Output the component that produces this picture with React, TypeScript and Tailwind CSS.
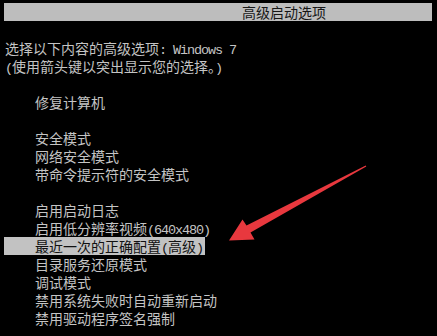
const cjk = "font-['Noto_Sans_CJK_SC',sans-serif]";

// ascii in the boot font is half the width of a CJK glyph
function A({ children }: { children: React.ReactNode }) {
  return <span className="font-['Liberation_Mono',monospace] text-[13.5px] tracking-[-1.1px]">{children}</span>;
}

const groups: React.ReactNode[][] = [
  ["修复计算机"],
  ["安全模式", "网络安全模式", "带命令提示符的安全模式"],
  [
    "启用启动日志",
    <>启用低分辨率视频<A>(640x480)</A></>,
    "HIGHLIGHT",
    "目录服务还原模式",
    "调试模式",
    "禁用系统失败时自动重新启动",
    "禁用驱动程序签名强制",
  ],
];

export default function App() {
  return (
    <div className={`relative w-[437px] h-[336px] overflow-hidden bg-black text-[#c4c4c4] text-[14px] leading-[18px] pt-[3px] ${cjk}`}>
      {/* 标题栏 */}
      <div className="ml-[4px] mr-[5px] h-[18px] bg-[#bdbdbd] text-[#161616] pl-[238px]">高级启动选项</div>

      <div className="h-[18px]" />
      <div className="pl-[5px] h-[18px]">
        选择以下内容的高级选项<A>: Windows 7</A>
      </div>
      <div className="pl-[5px] h-[18px]">
        <A>(</A>使用箭头键以突出显示您的选择。<A>)</A>
      </div>

      {groups.map((g, i) => (
        <div key={i} className="pt-[18px]">
          {g.map((item, j) =>
            item === "HIGHLIGHT" ? (
              <div key={j} className="h-[18px]">
                <span className="inline-block ml-[4px] pl-[31px] pr-[2px] h-[18px] bg-[#c2c2c2] text-[#111]">
                  最近一次的正确配置<A>(</A>高级<A>)</A>
                </span>
              </div>
            ) : (
              <div key={j} className="pl-[35px] h-[18px]">
                {item}
              </div>
            )
          )}
        </div>
      ))}

      {/* 红色箭头 */}
      <svg className="absolute left-0 top-0" width="437" height="336" viewBox="0 0 437 336">
        <polygon
          points="366.3,166.5 250.5,232.5 254.5,239.5 229,240.5 242.5,219.5 246.5,225.5 365.7,165.5"
          fill="#e8383e"
        />
      </svg>
    </div>
  );
}
